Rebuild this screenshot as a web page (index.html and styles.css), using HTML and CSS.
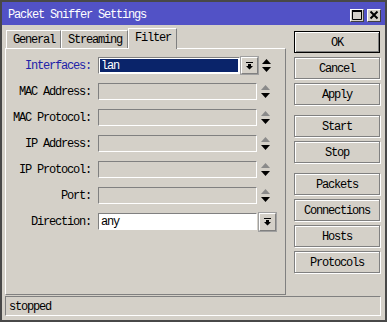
FILE: index.html
```html
<!DOCTYPE html>
<html lang="en">
<head>
    <meta charset="UTF-8">
    <title>Packet Sniffer Settings</title>
    <link rel="stylesheet" href="styles.css">
</head>
<body>
    <div class="window">
        <div class="titlebar">
            <span class="title">Packet Sniffer Settings</span>
            <div class="win-btns">
                <span class="win-btn">
                    <svg width="10" height="10" viewBox="0 0 10 10"><path d="M0.5 0.5h9v9h-9z" fill="none" stroke="#000" stroke-width="1"/><rect x="0" y="0" width="10" height="2" fill="#000"/></svg>
                </span>
                <span class="win-btn">
                    <svg width="10" height="10" viewBox="0 0 10 10"><path d="M1.5 1.5l7 7M8.5 1.5l-7 7" stroke="#000" stroke-width="2"/></svg>
                </span>
            </div>
        </div>

        <div class="main">
            <div class="left">
                <div class="tabs">
                    <div class="tab">General</div>
                    <div class="tab">Streaming</div>
                    <div class="tab active">Filter</div>
                </div>
                <div class="panel">
                    <div class="row">
                        <span class="label label-blue">Interfaces:</span>
                        <div class="field field-short field-sel"><span class="sel">lan</span></div>
                        <span class="drop">
                            <svg width="7" height="8" viewBox="0 0 7 8"><path d="M0 0h7v1H0z M2 2h3v2h2L3.5 7.5 0 4h2z" fill="#000"/></svg>
                        </span>
                        <span class="spin">
                            <svg width="9" height="13" viewBox="0 0 9 13"><path d="M4.5 0L9 5H0z" fill="#000"/><path d="M0 8h9l-4.5 5z" fill="#000"/></svg>
                        </span>
                    </div>
                    <div class="row">
                        <span class="label">MAC Address:</span>
                        <div class="field disabled"></div>
                        <span class="spin">
                            <svg width="9" height="13" viewBox="0 0 9 13"><path d="M4.5 0L9 5H0z" fill="#8a8a8a"/><path d="M0 8h9l-4.5 5z" fill="#000"/></svg>
                        </span>
                    </div>
                    <div class="row">
                        <span class="label">MAC Protocol:</span>
                        <div class="field disabled"></div>
                        <span class="spin">
                            <svg width="9" height="13" viewBox="0 0 9 13"><path d="M4.5 0L9 5H0z" fill="#8a8a8a"/><path d="M0 8h9l-4.5 5z" fill="#000"/></svg>
                        </span>
                    </div>
                    <div class="row">
                        <span class="label">IP Address:</span>
                        <div class="field disabled"></div>
                        <span class="spin">
                            <svg width="9" height="13" viewBox="0 0 9 13"><path d="M4.5 0L9 5H0z" fill="#8a8a8a"/><path d="M0 8h9l-4.5 5z" fill="#000"/></svg>
                        </span>
                    </div>
                    <div class="row">
                        <span class="label">IP Protocol:</span>
                        <div class="field disabled"></div>
                        <span class="spin">
                            <svg width="9" height="13" viewBox="0 0 9 13"><path d="M4.5 0L9 5H0z" fill="#8a8a8a"/><path d="M0 8h9l-4.5 5z" fill="#000"/></svg>
                        </span>
                    </div>
                    <div class="row">
                        <span class="label">Port:</span>
                        <div class="field disabled"></div>
                        <span class="spin">
                            <svg width="9" height="13" viewBox="0 0 9 13"><path d="M4.5 0L9 5H0z" fill="#8a8a8a"/><path d="M0 8h9l-4.5 5z" fill="#000"/></svg>
                        </span>
                    </div>
                    <div class="row">
                        <span class="label">Direction:</span>
                        <div class="field">any</div>
                        <span class="drop drop-dir">
                            <svg width="7" height="8" viewBox="0 0 7 8"><path d="M0 0h7v1H0z M2 2h3v2h2L3.5 7.5 0 4h2z" fill="#000"/></svg>
                        </span>
                    </div>
                </div>
            </div>

            <div class="buttons">
                <div class="group">
                    <div class="btn btn-default">OK</div>
                    <div class="btn">Cancel</div>
                    <div class="btn">Apply</div>
                </div>
                <div class="group">
                    <div class="btn">Start</div>
                    <div class="btn">Stop</div>
                </div>
                <div class="group">
                    <div class="btn">Packets</div>
                    <div class="btn">Connections</div>
                    <div class="btn">Hosts</div>
                    <div class="btn">Protocols</div>
                </div>
            </div>
        </div>

        <div class="statusbar">stopped</div>
    </div>
</body>
</html>
```

FILE: styles.css
```css
* {
    margin: 0;
    padding: 0;
    box-sizing: border-box;
}

body {
    background: #404040;
    font-family: 'Liberation Mono', 'DejaVu Sans Mono', monospace;
    font-size: 12px;
    letter-spacing: -1.2px;
    color: #000;
}

.window {
    width: 387px;
    height: 322px;
    border: 2px solid #484848;
    background: #d4d0c8;
    display: flex;
    flex-direction: column;
}

.titlebar {
    height: 23px;
    background: #5252c6;
    color: #fff;
    display: flex;
    justify-content: space-between;
    align-items: center;
    padding: 0 4px 0 6px;
}

.title {
    line-height: 23px;
    padding-top: 3px;
}

.win-btns {
    display: flex;
    gap: 3px;
    margin-top: 3px;
}

.win-btn {
    width: 14px;
    height: 13px;
    background: #d4d0c8;
    border: 1px solid;
    border-color: #fff #404040 #404040 #fff;
    display: flex;
    align-items: center;
    justify-content: center;
}

.main {
    flex: 1;
    display: flex;
    gap: 8px;
    padding: 3px 5px 0 3px;
}

.left {
    width: 281px;
    display: flex;
    flex-direction: column;
}

.tabs {
    height: 20px;
    display: flex;
    align-items: flex-end;
    padding-left: 1px;
}

.tab {
    height: 18px;
    line-height: 18px;
    padding: 0 5px 0 6px;
    border: 1px solid;
    border-color: #fff #808080 transparent #fff;
    border-bottom: none;
    background: #cdc9c1;
}

.tab.active {
    height: 21px;
    line-height: 18px;
    background: #d4d0c8;
    margin-bottom: -1px;
    position: relative;
    z-index: 1;
}

.panel {
    flex: 1;
    border: 1px solid;
    border-color: #fff #808080 #808080 #fff;
    padding-top: 8px;
    display: flex;
    flex-direction: column;
    gap: 9px;
}

.row {
    display: flex;
    align-items: center;
    height: 17px;
}

.label {
    width: 85px;
    text-align: right;
    margin-right: 7px;
    padding-top: 1px;
}

.label-blue {
    color: #2222a8;
}

.field {
    width: 159px;
    height: 17px;
    border: 1px solid;
    border-color: #808080 #fff #fff #808080;
    background: #fff;
    line-height: 16px;
    padding-left: 2px;
}

.field.disabled {
    background: #d4d0c8;
}

.field-short {
    width: 142px;
}

.field-sel {
    padding: 1px;
}

.sel {
    display: block;
    height: 100%;
    background: #0a246a;
    color: #fff;
    line-height: 14px;
    padding-left: 1px;
    outline: 1px solid #fff;
}

.drop {
    width: 17px;
    height: 17px;
    margin-left: 1px;
    border: 1px solid;
    border-color: #fff #808080 #808080 #fff;
    outline: 1px solid #a0a0a0;
    display: flex;
    align-items: center;
    justify-content: center;
}

.drop-dir {
    height: 18px;
    margin-left: 2px;
}

.spin {
    margin-left: 4px;
    display: flex;
}

.buttons {
    width: 86px;
    padding-top: 3px;
    display: flex;
    flex-direction: column;
    gap: 10px;
}

.group {
    display: flex;
    flex-direction: column;
    gap: 4px;
}

.btn {
    height: 22px;
    line-height: 22px;
    text-align: center;
    border: 1px solid #808080;
    box-shadow: inset 1px 1px #fff, 1px 1px #fff;
}

.btn-default {
    border: 1px solid #000;
    box-shadow: inset 1px 1px #fff, inset -1px -1px #808080;
}

.statusbar {
    height: 20px;
    margin: 1px 4px 4px 3px;
    border: 1px solid;
    border-color: #808080 #fff #fff #808080;
    line-height: 20px;
    padding-left: 3px;
}
```
